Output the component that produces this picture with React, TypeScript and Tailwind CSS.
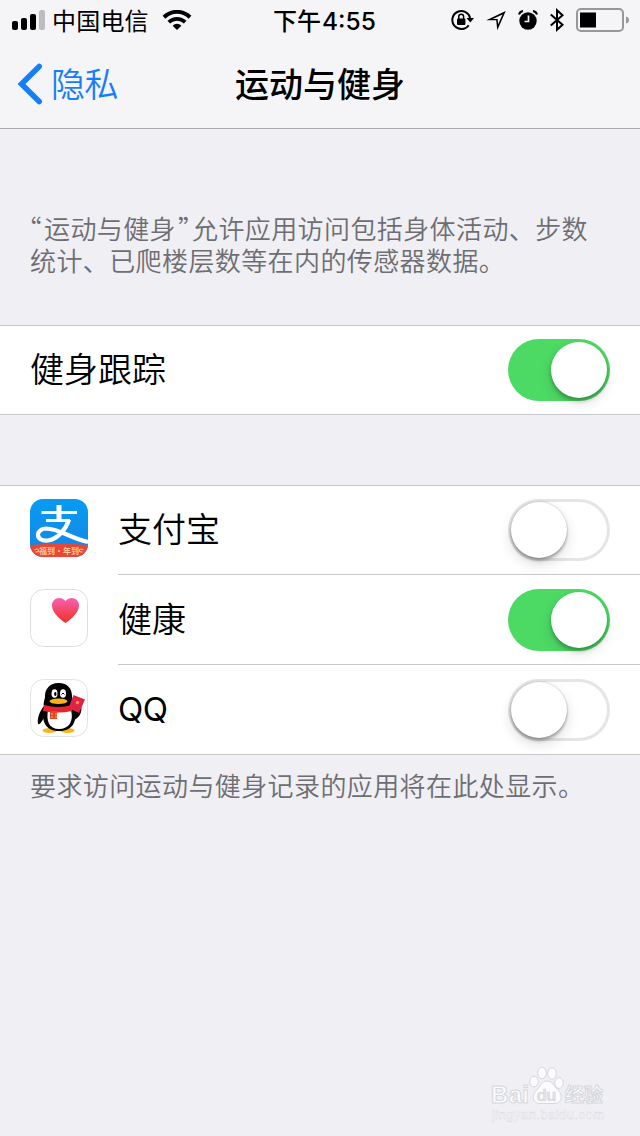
import React, { useState } from 'react';

const FONT = "font-['Noto_Sans_CJK_SC',sans-serif]";

function StatusBar() {
  return (
    <div className="relative h-10 flex items-center text-black">
      <svg className="ml-3 shrink-0" width="34" height="20" viewBox="0 0 34 20">
        <rect x="0" y="11" width="6" height="9" rx="2" />
        <rect x="9" y="8" width="6" height="12" rx="2" />
        <rect x="18" y="4" width="6" height="16" rx="2" />
        <rect x="27" y="0" width="6" height="20" rx="2" fill="#bdbdc1" />
      </svg>
      <span className="ml-[6px] text-[24px] leading-10 tracking-[0.2px] whitespace-nowrap">中国电信</span>
      <svg className="ml-[13px] shrink-0" width="30" height="20" viewBox="0 0 30 20" fill="none" stroke="#000">
        <path d="M2 7.2C9.5 0 20.500 0 28 7.200" strokeWidth="4" />
        <path d="M6.800 12.200C11.500 7.800 18.500 7.800 23.200 12.200" strokeWidth="3.800" />
        <path d="M10.600 15.700C13 13 17 13 19.400 15.700L15 20Z" fill="#000" stroke="none" />
      </svg>

      <div className="absolute left-[273px] top-0 flex items-baseline text-[24px] leading-10 font-medium whitespace-nowrap">
        <span>下午</span>
        <span className="ml-px font-['Inter',sans-serif] text-[24.500px]">4:55</span>
      </div>

      <div className="ml-auto mr-[11px] flex items-center">
        {/* rotation lock */}
        <svg width="23" height="22" viewBox="0 0 23 22">
          <path d="M17.700 16.200A9 9 0 1 1 19.100 9" fill="none" stroke="#000" strokeWidth="2" />
          <path d="M15.500 9h7.500l-3.700 4.600z" />
          <rect x="6" y="9.500" width="8.400" height="6.500" rx="1" />
          <path d="M7.800 10V7.600a2.400 2.400 0 0 1 4.800 0V10" fill="none" stroke="#000" strokeWidth="1.500" />
        </svg>
        <svg className="ml-3" width="21" height="21" viewBox="0 0 21 21">
          <path d="M.3 10.300L19.700 .9L11.300 20.300L10.200 10.300ZM6.800 9L11.600 9L12.200 14.200L16.500 4.400Z" fillRule="evenodd" />
        </svg>
        {/* alarm */}
        <svg className="ml-[11px]" width="20" height="20" viewBox="0 0 20 20">
          <circle cx="10" cy="11" r="8.700" />
          <path d="M1 4.500A5 5 0 0 1 5 1M19 4.500A5 5 0 0 0 15 1" fill="none" stroke="#000" strokeWidth="2" />
          <path d="M10.500 5.500V11.500H6.500" fill="none" stroke="#f5f5f7" strokeWidth="1.700" />
        </svg>
        <svg className="ml-3" width="14" height="24" viewBox="0 0 14 24">
          <path d="M.8 6.500L12.500 16.800L7 21.800V2.200L12.500 7.200L.8 17.500" fill="none" stroke="#000" strokeWidth="2" />
        </svg>
        <svg className="ml-3" width="53" height="24" viewBox="0 0 53 24">
          <rect x="1" y="1" width="46" height="22" rx="4" fill="none" stroke="#97979b" strokeWidth="2" />
          <rect x="4" y="4.500" width="16" height="15" />
          <path d="M50 8.500Q53 9 53 12T50 15.500Z" fill="#97979b" />
        </svg>
      </div>
    </div>
  );
}

function NavBar() {
  return (
    <div className="relative h-[88px] flex items-center justify-center">
      <button className="absolute left-[17px] top-0 h-[88px] flex items-center text-[#157efb]">
        <svg width="26" height="42" viewBox="0 0 26 42" fill="none" stroke="currentColor" strokeWidth="5.500" strokeLinecap="round" strokeLinejoin="miter">
          <path d="M22.200 3.500L4.500 21L22.200 38.500" />
        </svg>
        <span className="ml-2 text-[34px] leading-[84px] pb-0.5 font-[350] tracking-[-0.5px]">隐私</span>
      </button>
      <h1 className="text-[34px] leading-[86px] pb-0.5 font-medium">运动与健身</h1>
    </div>
  );
}

function Toggle({ initial }: { initial: boolean }) {
  const [on, setOn] = useState(initial);
  return (
    <button
      role="switch"
      aria-checked={on}
      onClick={() => setOn(!on)}
      className={`w-[102px] h-[62px] shrink-0 rounded-full p-[3px] flex ${
        on ? 'bg-[#4cd964] justify-end' : 'bg-white justify-start shadow-[inset_0_0_0_3px_#e5e5e5]'
      }`}
    >
      <span
        className={`w-14 h-14 rounded-full bg-white ${
          on
            ? 'shadow-[0_3px_4px_rgba(0,0,0,0.28),0_6px_14px_rgba(0,0,0,0.1)]'
            : 'shadow-[0_3px_3px_rgba(0,0,0,0.25),0_6px_14px_rgba(0,0,0,0.14),0_0_2px_rgba(0,0,0,0.25)]'
        }`}
      />
    </button>
  );
}

function AlipayIcon() {
  return (
    <svg width="58" height="58" viewBox="0 0 58 58">
      <defs>
        <clipPath id="alipay">
          <rect width="58" height="58" rx="13" />
        </clipPath>
        <linearGradient id="alipayBg" x1="0" y1="0" x2="0" y2="1">
          <stop offset="0" stopColor="#079bf2" />
          <stop offset="1" stopColor="#1685e4" />
        </linearGradient>
      </defs>
      <g clipPath="url(#alipay)">
        <rect width="58" height="58" fill="url(#alipayBg)" />
        <g fill="none" stroke="#fff">
          <path d="M29 6V20" strokeWidth="5" />
          <path d="M11.500 13.500H47M16 21.500H40" strokeWidth="3.200" />
          <path d="M39 20.500C36 30 28 40 18 41.500C5 43 5 30 16 29.500C29 29.500 41 39.500 58 43" strokeWidth="4.200" />
        </g>
        <path d="M0 46Q29 43 58 46V58H0Z" fill="#e84637" />
        <text x="29" y="54.800" textAnchor="middle" fontSize="8" fontWeight="700" fill="#ffc795" className="font-['Noto_Sans_CJK_SC',sans-serif]">福到·年到</text>
        <path d="M4.500 51q3-2 4 0t-3 2M53.500 51q-3-2-4 0t3 2" fill="none" stroke="#ffc08a" strokeWidth="1.200" />
      </g>
    </svg>
  );
}

function HealthIcon() {
  return (
    <svg width="58" height="58" viewBox="0 0 58 58">
      <defs>
        <linearGradient id="heart" x1="0" y1="0" x2="0" y2="1">
          <stop offset="0" stopColor="#f760b4" />
          <stop offset="1" stopColor="#f2301f" />
        </linearGradient>
      </defs>
      <rect x=".5" y=".5" width="57" height="57" rx="13" fill="#fff" stroke="#dedee0" />
      <path d="M35.500 34C30 30 22 24 22 16.500C22 9 31 6.500 35.500 12C40 6.500 49 9 49 16.500C49 24 41 30 35.500 34Z" fill="url(#heart)" />
    </svg>
  );
}

function QQIcon() {
  return (
    <svg width="58" height="58" viewBox="0 0 58 58">
      <rect x=".5" y=".5" width="57" height="57" rx="13" fill="#fff" stroke="#dfe4e6" />
      <ellipse cx="19.500" cy="51.500" rx="7" ry="2.500" fill="#f6b51e" />
      <ellipse cx="37.500" cy="51.500" rx="7" ry="2.500" fill="#f6b51e" />
      <path d="M14 27C9 33 7 40 8 45C10 46 12 42 14 39ZM43 32L51 27C53 34 48 40 42 42Z" />
      <path d="M14 28H44C48 42 43 52 29 52S11 42 14 28Z" />
      <path d="M18 31H41C44 42 39 50 29 50S16 42 18 31Z" fill="#fff" />
      <path d="M28.500 4C19 4 14.500 11 15 18C15 20 13 23 14 28H43C44 23 42 20 42 17C42 10 38 4 28.500 4Z" />
      <ellipse cx="24.500" cy="14.500" rx="3" ry="4.300" fill="#fff" />
      <ellipse cx="33" cy="14.500" rx="3" ry="4.300" fill="#fff" />
      <ellipse cx="25.300" cy="15" rx="1.200" ry="1.900" />
      <path d="M31.500 15.500q1.500-3 3 0" fill="none" stroke="#000" />
      <ellipse cx="28.500" cy="22.300" rx="9" ry="2.800" fill="#f9b318" />
      <path d="M14 26Q28 30 42 26V32Q28 35 13 32Z" fill="#e5252b" />
      <path d="M20 32H27V40H20Z" fill="#e5442b" />
      <path d="M21 35h2m2 0h2m-6 3h2m2 0h2" stroke="#f9b63a" strokeWidth="1.200" />
      <path d="M43.500 16L55 20.500L49 34L38.500 29Z" fill="#df2346" />
      <circle cx="47.500" cy="23.500" r="1.700" fill="#f7923c" />
    </svg>
  );
}

const apps = [
  { name: '支付宝', icon: <AlipayIcon />, on: false, row: 'h-[89px] pt-[13px]', label: '' },
  { name: '健康', icon: <HealthIcon />, on: true, row: 'h-[90px] pt-[14px]', label: '' },
  { name: 'QQ', icon: <QQIcon />, on: false, row: 'h-[89px] pt-[14px]', label: "font-['Inter','Noto_Sans_CJK_SC',sans-serif] font-normal text-[33px] leading-[61px] tracking-[-0.5px]" },
];

function Watermark() {
  return (
    <div className="absolute left-[490px] top-[1065px] w-[118px] h-[58px]">
      <svg width="118" height="58" viewBox="0 0 118 58" fill="#fcfcfe" stroke="#d6d6dc" strokeWidth="1">
        <text x="1" y="37.500" fontSize="24" fontWeight="700" textLength="38" className="font-['Liberation_Sans',sans-serif]">Bai</text>
        <ellipse cx="44" cy="16.500" rx="4.200" ry="5.300" />
        <ellipse cx="52" cy="8" rx="4.300" ry="5.700" />
        <ellipse cx="62" cy="8.500" rx="4.300" ry="5.700" />
        <ellipse cx="69" cy="18" rx="4.300" ry="5.300" />
        <path d="M57 16C51 16 50 22 46 26C41 31 43 38.500 50 38.500H64C72 38.500 73 31 69 26C64 22 63 16 57 16Z" />
        <text x="46.500" y="35.500" fontSize="17" fontWeight="700" fill="#e2e2e8" textLength="20" strokeWidth=".5" className="font-['Liberation_Sans',sans-serif]">du</text>
        <text x="75" y="36.500" fontSize="19" fontWeight="700" textLength="38" className="font-['Noto_Sans_CJK_SC',sans-serif]">经验</text>
        <text x="2" y="53.500" fontSize="13" strokeWidth=".4" textLength="112" className="font-['Liberation_Sans',sans-serif]">jingyan.baidu.com</text>
      </svg>
    </div>
  );
}

export default function App() {
  return (
    <div className={`relative w-[640px] h-[1136px] overflow-hidden bg-[#efeff4] text-black ${FONT}`}>
      <header className="h-[129px] bg-[#f5f5f7] border-b border-[#a9a9af]">
        <StatusBar />
        <NavBar />
      </header>

      <div className="mt-[83px] ml-[30px] text-[26px] leading-8 tracking-[0.4px] font-[350] text-[#6d6d72] whitespace-nowrap">
        <p className="flex">
          {/* full-width quotes squeezed to their visible half */}
          <span className="w-[14px] pr-[2px] flex justify-end">“</span>
          运动与健身
          <span className="w-[16px] pl-[2px]">”</span>
          允许应用访问包括身体活动、步数
        </p>
        <p>统计、已爬楼层数等在内的传感器数据。</p>
      </div>

      <div className="mt-[49px] h-[90px] pl-[30px] pr-[30px] bg-white border-y border-[#c8c7cc] flex items-center justify-between">
        <span className="text-[34px] leading-[82px] pb-1 font-[350]">健身跟踪</span>
        <Toggle initial={true} />
      </div>

      <div className="mt-[70px] bg-white border-y border-[#c8c7cc]">
        {apps.map((app, i) => (
          <div key={app.name} className="flex pl-[30px]">
            <span className={`w-[88px] shrink-0 ${app.row}`}>{app.icon}</span>
            <div
              className={`flex-1 flex items-start justify-between pr-[30px] ${app.row} ${
                i < apps.length - 1 ? 'border-b border-[#c8c7cc]' : ''
              }`}
            >
              <span className={app.label || 'font-[350] text-[34px] leading-[58px]'}>{app.name}</span>
              <Toggle initial={app.on} />
            </div>
          </div>
        ))}
      </div>

      <p className="mt-[14px] ml-[30px] text-[26px] leading-8 tracking-[0.4px] font-[350] text-[#6d6d72] whitespace-nowrap">
        要求访问运动与健身记录的应用将在此处显示。
      </p>

      <Watermark />
    </div>
  );
}
